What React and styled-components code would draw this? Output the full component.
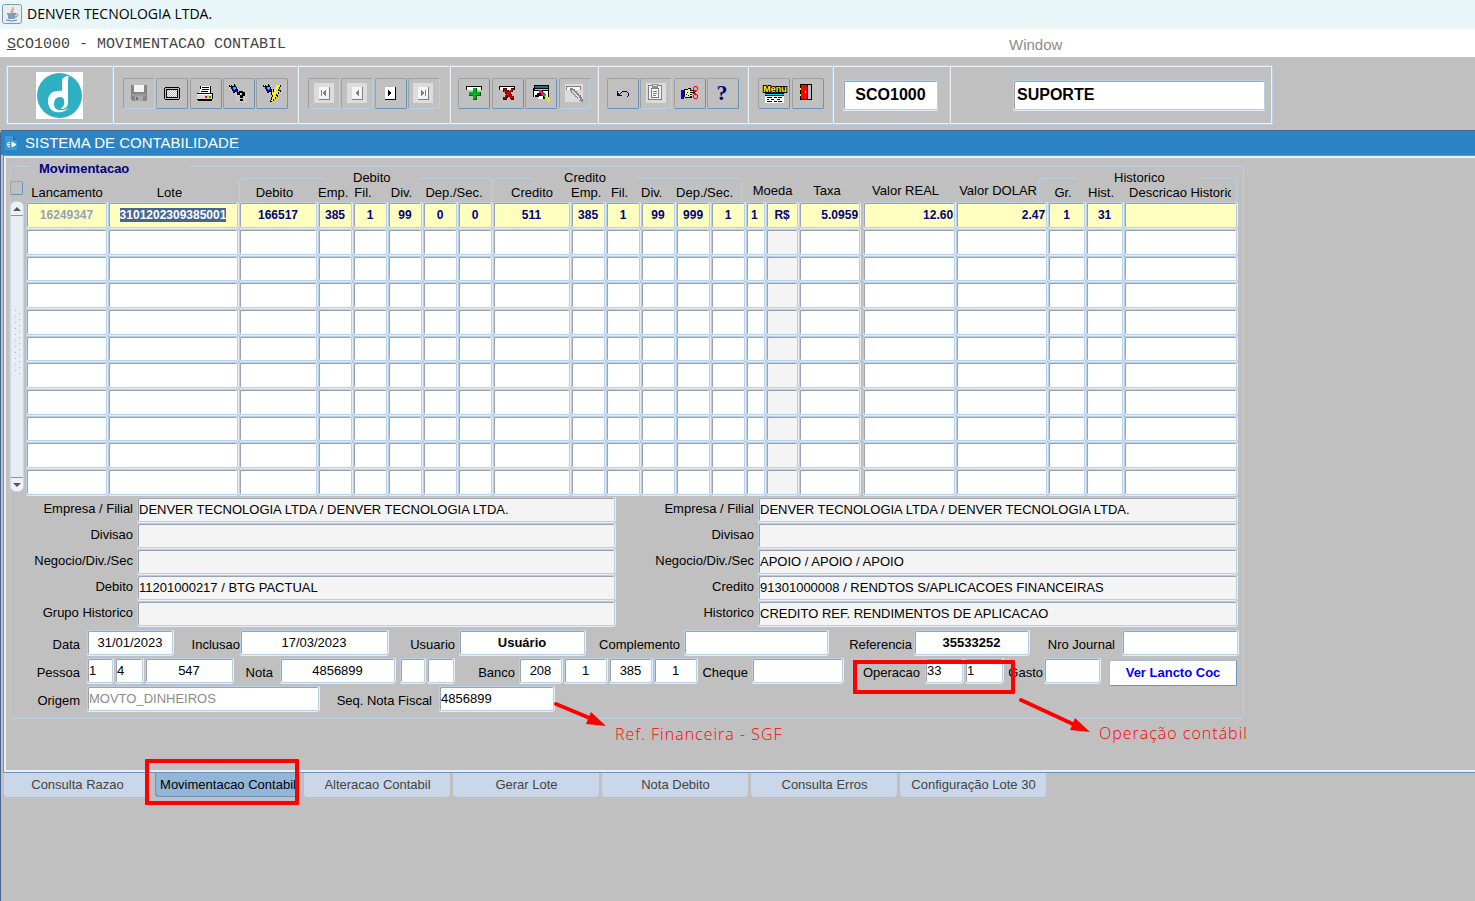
import React, { useEffect, useRef } from "react";
import styled, { createGlobalStyle, css } from "styled-components";

const sans = '"Liberation Sans", Arial, sans-serif';

const GlobalStyle = createGlobalStyle`
  * { box-sizing: border-box; }
  body { margin: 0; background: #c0c0c0; font: 13px/16px ${sans}; color: #000; }
  html, body, #root { min-height: 100%; }
  input, button, select { font: inherit; color: inherit; border-radius: 0; margin: 0; }
`;

const Page = styled.div`
  min-height: 100vh;
  display: flex;
  flex-direction: column;
  overflow: hidden;
`;

const TitleBar = styled.header`
  display: flex;
  align-items: center;
  gap: 5px;
  height: 29px;
  padding: 0 2px 2px;
  background: #e8f6f8;
  font: 14px/20px "Open Sans", "Noto Sans", sans-serif;
`;

const MenuBar = styled.nav`
  display: flex;
  align-items: center;
  height: 28px;
  padding: 3px 0 0 7px;
  background: #fff;
`;

const MenuButton = styled.button`
  border: 0;
  padding: 0;
  background: none;
  text-align: left;
  ${(p) =>
    p.$mono
      ? css`flex: 0 0 1002px; font: 15px/20px "Liberation Mono", monospace; color: #444;`
      : css`font: 15px/20px ${sans}; color: #8c8c8c;`}
`;

const ToolArea = styled.div`
  padding: 8px 6px 5px;
`;

const ToolFrame = styled.div`
  display: inline-flex;
  height: 60px;
  border: 1px solid #b8cfe5;
  box-shadow: inset 1px 1px #e8f0fa, inset -1px -1px #e8f0fa;
  vertical-align: top;
`;

const ToolSection = styled.div`
  display: flex;
  align-items: flex-start;
  justify-content: ${(p) => p.$align || "space-between"};
  width: ${(p) => p.$w}px;
  padding: ${(p) => p.$pad || "12px 9px 0 10px"};
  & + & {
    border-left: 1px solid #b8cfe5;
    box-shadow: inset 1px 0 #e8f0fa;
  }
`;

const ToolButton = styled.button`
  display: flex;
  align-items: center;
  justify-content: center;
  width: 32px;
  height: 31px;
  padding: 0 1px 2px 0;
  background: #c0c0c0;
  border: 1px solid #a0a0a0;
  border-right-color: #6b92b8;
  border-bottom-color: #6b92b8;
  border-radius: 2px;
  &:disabled {
    border-right-color: #b8cfe5;
    border-bottom-color: #b8cfe5;
  }
`;

const ToolInput = styled.input`
  width: ${(p) => p.$w}px;
  height: 30px;
  padding: 0 3px;
  border: 1px solid #b8cfe5;
  border-radius: 2px;
  box-shadow: inset 1px 1px #9aa4b0, 0 1px #e4edf8;
  background: #fff;
  font: bold 16px/20px ${sans};
  text-align: ${(p) => p.$align || "left"};
`;

const AppFrame = styled.main`
  flex: 1;
  border-left: 1px solid #46658f;
  border-top-left-radius: 4px;
`;

const AppTitle = styled.h1`
  display: flex;
  align-items: center;
  gap: 8px;
  margin: 0;
  height: 25px;
  padding-left: 4px;
  border-top: 1px solid #46658f;
  background: #2c84c4;
  color: #fff;
  font: 15px/20px ${sans};
`;

const Canvas = styled.section`
  position: relative;
  margin-left: 2px;
  border: 1px solid #6f90b8;
  border-right: 0;
  box-shadow: inset 0 2px #e8eff9, inset 2px 0 #e8eff9, inset 0 -2px #e8eff9;
  padding: 2px 0 53px 5px;
`;

const Panel = styled.fieldset`
  width: 1235px;
  min-width: 0;
  margin: 0;
  padding: 0 0 7px;
  border: 1px solid #b8cfe5;
  border-radius: 4px;
`;

const Legend = styled.legend`
  margin-left: 21px;
  padding: 5px 60px 0 8px;
  font: bold 13px/12px ${sans};
  color: #000080;
`;

const GridArea = styled.div`
  display: flex;
  gap: 2px;
  margin-top: -4px;
`;

const ScrollColumn = styled.div`
  width: 14px;
  display: flex;
  flex-direction: column;
  gap: 6px;
  padding-top: 10px;
`;

const RowCheck = styled.input`
  appearance: none;
  width: 13px;
  height: 14px;
  border: 1px solid #a0a0a0;
  border-right-color: #6b92b8;
  border-bottom-color: #6b92b8;
  border-radius: 2px;
`;

const ScrollTrack = styled.div`
  display: flex;
  flex-direction: column;
  height: 291px;
  border: 1px solid #c8d6e8;
  border-radius: 6px;
  background: #e9eef6;
  overflow: hidden;
`;

const ScrollButton = styled.button`
  display: flex;
  align-items: center;
  justify-content: center;
  height: 14px;
  padding: 0;
  border: 0 solid #8296b0;
  border-width: ${(p) => (p.$down ? "1px 0 0" : "0 0 1px")};
  background: #eef2f8;
`;

const ScrollThumb = styled.div`
  flex: 1;
  display: flex;
  align-items: center;
  justify-content: center;
  padding-bottom: 8px;
  &::after {
    content: "";
    width: 7px;
    height: 66px;
    background-image: linear-gradient(#a4b6ce 1px, transparent 1px),
      linear-gradient(#a4b6ce 1px, transparent 1px);
    background-size: 1px 6px;
    background-repeat: repeat-y;
    background-position: 1px 0, 5px 3px;
  }
`;

const Table = styled.table`
  table-layout: fixed;
  width: 1212px;
  border-collapse: separate;
  border-spacing: 0;
`;

const GroupHead = styled.th`
  position: relative;
  height: 13px;
  padding: 0 0 0 ${(p) => p.$start}px;
  font: 13px/13px ${sans};
  text-align: left;
  &::before {
    content: "";
    position: absolute;
    top: 7px;
    left: ${(p) => (p.$wide ? -10 : 0)}px;
    right: ${(p) => p.$right || 1}px;
    height: 22px;
    border: 1px solid #b8cfe5;
    border-bottom: 0;
    border-radius: 4px 4px 0 0;
  }
`;

const GroupLabel = styled.span`
  position: relative;
  padding: 0 ${(p) => p.$gap}px;
  background: #c0c0c0;
`;

const EmptyHead = styled.td`
  padding: 0;
`;

const ColHead = styled.th`
  position: relative;
  height: 18px;
  padding: ${(p) => (p.$raised ? "0 8px 4px 0" : "0 8px 1px 0")};
  ${(p) => p.$full && `padding: 0 0 ${p.$raised ? 4 : 1}px;`}
  ${(p) => p.$near && "padding: 0 15px 1px 0;"}
  ${(p) => p.$clip && "padding: 0 0 1px 5px; text-align: left;"}
  font: 13px/14px ${sans};
  white-space: nowrap;
`;

const ClipLabel = styled.span`
  display: block;
  width: 102px;
  overflow: hidden;
`;

const fieldFrame = css`
  border: 1px solid #b8cfe5;
  border-radius: 2px;
  box-shadow: inset 1px 1px #9aa4b0, 0 1px #e4edf8, 1px 0 #e4edf8;
`;

const Cell = styled.td`
  height: 27px;
  padding: 0 ${(p) => (p.$gap ? 3 : 1)}px 1px 0;
  line-height: 0;
  tr:nth-child(3n) > & {
    height: 26px;
  }
`;

const CellInput = styled.input`
  ${fieldFrame}
  display: block;
  width: 100%;
  height: 26px;
  padding: 0 1px 0 ${(p) => (p.$align === "left" ? 4 : 1)}px;
  background: ${(p) => (p.$current ? "#ffffc0" : p.$locked ? "#f4f4f4" : "#fff")};
  color: ${(p) => (p.$dim ? "#92a4b4" : "#000080")};
  font: bold 12px/16px ${sans};
  text-align: ${(p) => p.$align || "center"};
  outline: none;
  &::selection {
    background: #466590;
    color: #fff;
  }
  tr:nth-child(3n) & {
    height: 25px;
  }
`;

const Details = styled.div`
  display: grid;
  grid-template-columns: 127px 478px 143px 479px;
  grid-auto-rows: 25px;
  row-gap: 1px;
  margin-top: 1px;
`;

const DetailLabel = styled.label`
  padding: 4px 4px 0 0;
  text-align: right;
  line-height: 16px;
`;

const DetailInput = styled.input`
  ${fieldFrame}
  width: 100%;
  padding: 0 1px;
  background: #f4f4f4;
  line-height: 16px;
`;

const FormRows = styled.div`
  display: flex;
  flex-direction: column;
  gap: 3px;
  margin-top: 4px;
`;

const FormRow = styled.div`
  display: flex;
  align-items: center;
  height: 25px;
`;

const FormLabel = styled.label`
  flex: none;
  width: ${(p) => p.$w}px;
  padding: 4px ${(p) => p.$pad || 0}px 0 0;
  display: flex;
  justify-content: flex-end;
  white-space: nowrap;
`;

const FormInput = styled.input`
  ${fieldFrame}
  flex: none;
  width: ${(p) => p.$w}px;
  height: 25px;
  margin: 0 2px 0 ${(p) => p.$gap || 0}px;
  padding: 0 1px;
  background: #fff;
  color: ${(p) => (p.$dim ? "#8c8c8c" : "#000")};
  font-weight: ${(p) => (p.$bold ? "bold" : "normal")};
  text-align: ${(p) => (p.$center ? "center" : "left")};
`;

const ActionButton = styled.button`
  width: 128px;
  height: 26px;
  margin: 4px 0 0 7px;
  padding: 0;
  border: 1px solid #a8bcd0;
  border-right-color: #6b92b8;
  border-bottom-color: #6b92b8;
  border-radius: 2px;
  background: #fff;
  color: #0000ff;
  font: bold 13px/16px ${sans};
`;

const MarkBox = styled.span`
  position: absolute;
  left: ${(p) => p.$x}px;
  top: ${(p) => p.$y}px;
  width: ${(p) => p.$w}px;
  height: ${(p) => p.$h}px;
  border: 4px solid #f00;
  border-radius: 1px;
  pointer-events: none;
`;

const MarkArrow = styled.svg`
  position: absolute;
  left: ${(p) => p.$x}px;
  top: ${(p) => p.$y}px;
  pointer-events: none;
`;

const MarkNote = styled.span`
  position: absolute;
  left: ${(p) => p.$x}px;
  top: ${(p) => p.$y}px;
  color: #f00;
  font: 16px/24px "Open Sans", "Noto Sans", sans-serif;
  font-weight: 300;
  letter-spacing: 1px;
  white-space: nowrap;
`;

const TabBar = styled.div`
  display: flex;
  gap: 3px;
  padding-left: 3px;
`;

const Tab = styled.button`
  position: relative;
  width: 146px;
  height: 24px;
  padding: 0 0 0 1px;
  border: 0;
  border-radius: 0 0 4px 4px;
  background: #c9d7e9;
  color: #444;
  white-space: nowrap;
  ${(p) =>
    p.$active &&
    css`
      margin: 0 1px 0 2px;
      width: 145px;
      background: #92b6d8;
      color: #000;
      box-shadow: inset 1px -1px #6b92b8;
    `}
`;

const Icon = ({ children, size = 20, ...rest }) => (
  <svg width={size} height={size} viewBox={`0 0 ${size} ${size}`} overflow="visible" shapeRendering="crispEdges" aria-hidden="true" {...rest}>
    {children}
  </svg>
);

const JavaIcon = () => (
  <svg width="20" height="20" viewBox="0 0 20 20" aria-hidden="true">
    <rect x=".5" y=".5" width="19" height="19" rx="2" fill="#e9edf0" stroke="#7f98ad" />
    <path d="M10 3c3 2-3 3 0 6M12 5c-2 1-1 2-1 4" stroke="#e0843c" fill="none" />
    <path d="M5 10h9M6 12h7M6 14h7" stroke="#5b86ad" strokeWidth="1.3" />
    <path d="M14 10c3 0 2 3-1 3M4 16q6 2 11 0" stroke="#5b86ad" fill="none" />
  </svg>
);

const Logo = () => (
  <svg width="47" height="47" viewBox="0 0 47 47" aria-label="Denver">
    <rect width="47" height="47" fill="#fff" />
    <circle cx="23.5" cy="23.5" r="22.5" fill="#2eafc3" />
    <path
      d="M26 9c0-3 3-5 7-5-1 2-1 3-1 5v21c0 5-3 7-6 7l-1-1c2-1 3-2 3-4 1-5-1-7-4-7-4 0-6 3-6 7 0 5 4 7 9 6 2 0 4-1 6-2-4 4-9 5-13 4-5-1-8-5-8-11 0-7 5-11 14-10z"
      fill="#fff"
    />
  </svg>
);

const AppIcon = () => (
  <svg width="12" height="16" viewBox="0 0 12 16" aria-hidden="true">
    <path d="M0 1h8l4 4v10H0z" fill="#3a9ad8" />
    <path d="M8 1v4h4z" fill="#1c6ca8" />
    <path d="M2 9.500h3M7 7v5l4-2.500z" stroke="#fff" strokeWidth="1" fill="#fff" />
    <path d="M5 7a2.500 2.500 0 100 5" stroke="#fff" fill="none" />
  </svg>
);

const SaveIcon = () => (
  <Icon>
    <path d="M2 2h16v16H3v-1H2z" fill="#868686" />
    <path d="M5 2h10v7H5z" fill="#f4f4f4" />
    <path d="M3 11h14v2H3z" fill="#9c9c9c" />
    <path d="M6 13h8v5H6z" fill="#a8a8a8" />
    <path d="M7 14h2v3H7z" fill="#707070" />
  </Icon>
);

const ScreenIcon = () => (
  <Icon>
    <path d="M3 4h14v1h1v11h-1v1H3v-1H2V5h1z" fill="#000" />
    <path d="M3 5h14v11H3z" fill="#c0c0c0" />
    <path d="M4 6h12v9H4z" fill="#000" />
    <path d="M5 7h10v7H5z" fill="#fff" />
    {[7, 9, 11, 13].map((y) => (
      <path key={y} d={`M5 ${y}h1v1h-1zM7 ${y}h1v1h-1zM9 ${y}h1v1h-1zM11 ${y}h1v1h-1zM13 ${y}h1v1h-1z`} fill="#40d8e8" />
    ))}
    {[8, 10, 12].map((y) => (
      <path key={y} d={`M6 ${y}h1v1h-1zM8 ${y}h1v1h-1zM10 ${y}h1v1h-1zM12 ${y}h1v1h-1zM14 ${y}h1v1h-1z`} fill="#c0c0c0" />
    ))}
  </Icon>
);

const PrinterIcon = () => (
  <Icon>
    <path d="M5 3h11v7H5z" fill="#000" />
    <path d="M6 3h9v7H4V9h1V6h1z" fill="#fff" />
    <path d="M7 4h7v1H7zM7 6h7v1H7zM6 8h7v1H6z" fill="#000" />
    <path d="M2 10h16v6h-1v2H3v-1H2z" fill="#000" />
    <path d="M2 11h15v5H2z" fill="#d8d8d8" />
    <path d="M2 11h15v1H2z" fill="#fff" />
    <path d="M10 13h2v2h-2z" fill="#f00" />
    <path d="M12 13h2v2h-2z" fill="#e8e800" />
    <path d="M14 13h2v2h-2z" fill="#00b000" />
  </Icon>
);

const Torch = () => (
  <>
    <path d="M1 2h3v1h2V1h1v1h1v2h1v2h1v3H7v1H5V8H4V6H3V4H1z" fill="#000" />
    <path d="M5 4h3v2H7v1H6V6H5z" fill="#00e0e8" />
    <path d="M4 5h1v1h1v1h1v2H5V7H4zM8 6h1v2H8z" fill="#0000f0" />
    <path d="M7 2h1v1H7z" fill="#e00000" />
    <path d="M2 2h1v1H2z" fill="#fff" />
  </>
);

const QueryIcon = () => (
  <Icon>
    <Torch />
    {[10, 12, 14, 16, 18].map((y) => (
      <path key={y} d={`M8 ${y}h1v1h-1zM10 ${y}h1v1h-1zM12 ${y}h1v1h-1zM14 ${y}h1v1h-1zM16 ${y}h1v1h-1zM18 ${y}h1v1h-1z`} fill="#f4f060" />
    ))}
    <path d="M9 9h2V8h4v1h2v4h-2v2h-3v-3h2v-2h-2v2H9zM12 16h3v2h-3z" fill="#000" />
  </Icon>
);

const RunQueryIcon = () => (
  <Icon>
    <Torch />
    <path d="M14 2h5v2h-1v2h-1v1h2v2h-2v2h-2v1h1v2h-2v2h-2v2h-2v1H8v-2h1v-3h1v-2H9V9h2V6h2V4h1z" fill="#000" />
    <path d="M14 2h4v2h-1v2h-1v2h2v1h-2v2h-2v2h1v1h-2v2h-2v2H9v-1h1v-3h1v-2h-1V9h2V6h1V4h1z" fill="#ffee20" />
  </Icon>
);

const NavIcon = ({ dir, bar, off }) => (
  <Icon>
    {off && <path d="M0 0h20v20H0z" fill="#dcdcdc" />}
    <path d="M5 4h11v13H5z" fill={off ? "#808080" : "#000"} />
    <path d="M5 4h10v12H5z" fill={off ? "#f4f4f4" : "#fff"} />
    <path
      d={dir === "left" ? "M12 7v6h-1v-1h-1v-1H9V9h1V8h1V7z" : "M8 7v6h1v-1h1v-1h1V9h-1V8H9V7z"}
      fill={off ? "#808080" : "#000"}
    />
    {bar && <path d={dir === "left" ? "M7 7h1v6H7z" : "M12 7h1v6h-1z"} fill={off ? "#808080" : "#000"} />}
  </Icon>
);

const RecordBar = () => (
  <>
    <path d="M2 3h16v4H2z" fill="#000" />
    <path d="M3 4h14v3H3z" fill="#fff" />
  </>
);

const AddIcon = () => (
  <Icon>
    <RecordBar />
    <path d="M9 5h4v4h4v4h-4v4H9v-4H5V9h4z" fill="#005800" />
    <path d="M9 5h3v4h4v3h-4v4H9v-4H5V9h4z" fill="#00b020" />
  </Icon>
);

const DeleteIcon = () => (
  <Icon>
    <RecordBar />
    <path d="M6 5h4v2h2v1h1V7h1V5h3v2h-1v2h-2v2h1v2h2v4h-3v-1h-1v-2h-2v1h-1v2H6v-3h2v-1h1v-2H8V9H6z" fill="#600000" />
    <path d="M7 6h2v2h2v1h2V7h1V6h2v1h-1v2h-2v2h1v2h2v2h-2v-1h-1v-2h-2v1H9v2H7v-1h1v-2h1v-1h1v-1H9V9H7z" fill="#c80000" />
  </Icon>
);

const ClearIcon = () => (
  <Icon>
    <path d="M3 2h15v14H7v-2H2V5h1z" fill="#000" />
    <path d="M4 3h13v2H4z" fill="#008080" />
    <path d="M4 6h13v1H4z" fill="#c0c0c0" />
    <path d="M3 8h5v2H6v2H4v2H3zM12 8h5v7h-2v-3h-2zM8 13h4v3H7z" fill="#fff" />
    <path d="M8 7h3v2h2v1h1v3h-3v-1h-1v-2H8z" fill="#f01070" />
    <path d="M12 11h3v3h-2v-1h-1z" fill="#00c020" />
    <path d="M14 13h2v1h2v2h1v3h-2v-1h-1v-2h-2z" fill="#f0e020" />
  </Icon>
);

const FindOffIcon = () => (
  <Icon>
    <path d="M1 1h18v18H1z" fill="#dcdcdc" />
    <path d="M2 3h15v4H2z" fill="#808080" />
    <path d="M3 4h13v3H3z" fill="#f4f4f4" />
    <path d="M6 5h3v1h2v2h2v2h2v2h2v2h1v2h1v3h-2v-1h-2v-2h-2v-2h-2v-2H9v-2H7V8H6z" fill="#888" />
    <path d="M8 7h1v1h1v1h1v1h1v1h1v1h1v1h1v2h1v2h-1v-1h-1v-2h-1v-1h-1v-1h-1v-1h-1v-1H9V9H8z" fill="#e4e4e4" />
  </Icon>
);

const UndoIcon = () => (
  <Icon>
    <path d="M4 8h1v2h1v1h1v1h2v1H4z" fill="#000080" />
    <path d="M7 10h1V9h1V8h5v1h1v1h1v3h-1v1h-1v-1h1v-3h-1V9H9v1H8v1H7z" fill="#000080" />
  </Icon>
);

const ClipboardIcon = () => (
  <Icon>
    <path d="M0 0h20v20H0z" fill="#dcdcdc" />
    <path d="M2 2h14v15H2z" fill="#808080" />
    <path d="M3 3h12v13H3z" fill="#f0f0f0" />
    <path d="M5 5h8v10H5z" fill="#808080" />
    <path d="M6 6h6v8H6z" fill="#fff" />
    <path d="M6 1h6v4H6z" fill="#909090" />
    <path d="M7 2h4v1H7z" fill="#e8e8e8" />
    <path d="M7 8h4v1H7zM7 10h4v1H7zM7 12h3v1H7z" fill="#808080" />
  </Icon>
);

const CutIcon = () => (
  <Icon>
    <path d="M2 7h3v9H2z" fill="#0000e0" />
    <path d="M5 6h4V5h3v2h4v3h-3v5h-7v-1H5z" fill="#000" />
    <path d="M6 7h3V6h2v2h4v1h-4v1h2v1h-2v1h2v1h-2v1H6z" fill="#f8f070" />
    <path d="M8 9h1v1H8zM7 11h1v1H7zM9 12h1v1H9z" fill="#000" />
    <path d="M15 3h3v1h1v3h-1v1h-3V7h-1V4h1zM15 11h3v1h1v3h-1v1h-3v-1h-1v-3h1z" fill="#f00" />
    <path d="M15 4h3v3h-3zM15 12h3v3h-3z" fill="#c0c0c0" />
    <path d="M14 8h3v1h-3zM14 10h3v1h-3z" fill="#f00" />
  </Icon>
);

const HelpIcon = () => (
  <Icon>
    <text x="10" y="17" textAnchor="middle" fontFamily="Liberation Serif, serif" fontWeight="bold" fontSize="22" fill="#000080">
      ?
    </text>
  </Icon>
);

const MenuIcon = () => (
  <Icon>
    <text x="11" y="9" textAnchor="middle" fontFamily="Liberation Sans, sans-serif" fontWeight="bold" fontSize="9" stroke="#000" strokeWidth="2" paintOrder="stroke" fill="#ffff00">
      Menu
    </text>
    <path d="M1 10h19v10H1z" fill="#000" />
    <path d="M1 11h19v1H1z" fill="#00e0e8" />
    <path d="M1 13h19v7H1z" fill="#fff" />
    <path d="M3 14h5v1H3zM3 16h2v1H3zM3 18h5v1H3zM10 14h3v1h-3zM14 14h4v1h-4zM10 18h3v1h-3zM14 18h4v1h-4zM7 16h3v1H7zM13 16h3v1h-3z" fill="#000" />
  </Icon>
);

const ExitIcon = () => (
  <Icon>
    <path d="M2 1h12v16H2z" fill="#000" />
    <path d="M10 2h3v14h-3z" fill="#c0c0c0" />
    <path d="M3 2h6v14H3z" fill="#f00" />
    <path d="M2 5h1v2H2zM2 11h1v2H2z" fill="#e8e800" />
    <path d="M7 8h1v2H7z" fill="#fff" />
  </Icon>
);

const tools = [
  {
    w: 185,
    items: [
      ["Salvar", <SaveIcon />, true],
      ["Tela", <ScreenIcon />],
      ["Imprimir", <PrinterIcon />],
      ["Entrar consulta", <QueryIcon />],
      ["Executar consulta", <RunQueryIcon />],
    ],
  },
  {
    w: 152,
    items: [
      ["Primeiro", <NavIcon dir="left" bar off />, true],
      ["Anterior", <NavIcon dir="left" off />, true],
      ["Proximo", <NavIcon dir="right" />],
      ["Ultimo", <NavIcon dir="right" bar off />, true],
    ],
    pad: "12px 9px 0 10px",
  },
  {
    w: 148,
    pad: "12px 6px 0 8px",
    items: [
      ["Inserir", <AddIcon />],
      ["Remover", <DeleteIcon />],
      ["Limpar", <ClearIcon />],
      ["Localizar", <FindOffIcon />, true],
    ],
  },
  {
    w: 150,
    items: [
      ["Desfazer", <UndoIcon />],
      ["Colar", <ClipboardIcon />, true],
      ["Recortar", <CutIcon />],
      ["Ajuda", <HelpIcon />],
    ],
    pad: "12px 8px 0 9px",
  },
  {
    w: 85,
    items: [
      ["Menu", <MenuIcon />],
      ["Sair", <ExitIcon />],
    ],
    pad: "12px 8px 0 10px",
  },
];

const columns = [
  { w: 82, v: "16249347", dim: true },
  { w: 131, v: "3101202309385001", selected: true },
  { w: 79, v: "166517" },
  { w: 35, v: "385" },
  { w: 35, v: "1" },
  { w: 35, v: "99" },
  { w: 35, v: "0" },
  { w: 35, v: "0" },
  { w: 78, v: "511" },
  { w: 35, v: "385" },
  { w: 35, v: "1" },
  { w: 35, v: "99" },
  { w: 35, v: "999" },
  { w: 35, v: "1" },
  { w: 20, v: "1", align: "left" },
  { w: 33, v: "R$", locked: true },
  { w: 64, v: "5.0959", align: "right", gap: true },
  { w: 93, v: "12.60", align: "right" },
  { w: 92, v: "2.47", align: "right" },
  { w: 38, v: "1" },
  { w: 38, v: "31" },
  { w: 114, v: "" },
];

const details = [
  ["Empresa / Filial", "DENVER TECNOLOGIA LTDA / DENVER TECNOLOGIA LTDA.", "Empresa / Filial", "DENVER TECNOLOGIA LTDA / DENVER TECNOLOGIA LTDA."],
  ["Divisao", "", "Divisao", ""],
  ["Negocio/Div./Sec", "", "Negocio/Div./Sec", "APOIO / APOIO / APOIO"],
  ["Debito", "11201000217 / BTG PACTUAL", "Credito", "91301000008 / RENDTOS S/APLICACOES FINANCEIRAS"],
  ["Grupo Historico", "", "Historico", "CREDITO REF. RENDIMENTOS DE APLICACAO"],
];

const Field = ({ id, label, lw, pad, value = "", ...rest }) => (
  <>
    <FormLabel htmlFor={id} $w={lw} $pad={pad}>
      {label}
    </FormLabel>
    <FormInput id={id} defaultValue={value} {...rest} />
  </>
);

const tabs = ["Consulta Razao", "Movimentacao Contabil", "Alteracao Contabil", "Gerar Lote", "Nota Debito", "Consulta Erros", "Configuração Lote 30"];

export default function App() {
  const lote = useRef(null);
  useEffect(() => {
    lote.current.focus({ preventScroll: true });
    lote.current.select();
  }, []);

  return (
    <Page>
      <GlobalStyle />
      <TitleBar>
        <JavaIcon />
        <span>DENVER TECNOLOGIA LTDA.</span>
      </TitleBar>
      <MenuBar>
        <MenuButton $mono>
          <u>S</u>CO1000 - MOVIMENTACAO CONTABIL
        </MenuButton>
        <MenuButton>Window</MenuButton>
      </MenuBar>
      <ToolArea>
        <ToolFrame>
          <ToolSection $w={105} $align="center" $pad="6px 0 0">
            <Logo />
          </ToolSection>
          {tools.map((section, i) => (
            <ToolSection key={i} $w={section.w} $pad={section.pad}>
              {section.items.map(([name, icon, off]) => (
                <ToolButton key={name} aria-label={name} disabled={off}>
                  {icon}
                </ToolButton>
              ))}
            </ToolSection>
          ))}
          <ToolSection $w={117} $pad="14px 10px 0">
            <ToolInput $w={95} $align="center" defaultValue="SCO1000" aria-label="Programa" />
          </ToolSection>
          <ToolSection $w={323} $align="flex-end" $pad="14px 7px 0">
            <ToolInput $w={252} defaultValue="SUPORTE" aria-label="Perfil" />
          </ToolSection>
        </ToolFrame>
      </ToolArea>
      <AppFrame>
        <AppTitle>
          <AppIcon />
          SISTEMA DE CONTABILIDADE
        </AppTitle>
        <Canvas>
          <Panel>
            <Legend>Movimentacao</Legend>
            <GridArea>
              <ScrollColumn>
                <RowCheck type="checkbox" aria-label="Selecionar" />
                <ScrollTrack>
                  <ScrollButton aria-label="Subir">
                    <svg width="8" height="4" viewBox="0 0 8 4"><path d="M0 4l4-4 4 4z" fill="#556" /></svg>
                  </ScrollButton>
                  <ScrollThumb />
                  <ScrollButton $down aria-label="Descer">
                    <svg width="8" height="4" viewBox="0 0 8 4"><path d="M0 0l4 4 4-4z" fill="#556" /></svg>
                  </ScrollButton>
                </ScrollTrack>
              </ScrollColumn>
              <Table>
                <colgroup>
                  {columns.map((c, i) => (
                    <col key={i} width={c.w} />
                  ))}
                </colgroup>
                <thead>
                  <tr>
                    <EmptyHead colSpan={2} />
                    <GroupHead colSpan={6} $start={86}><GroupLabel $gap={28}>Debito</GroupLabel></GroupHead>
                    <GroupHead colSpan={6} $start={40} $right={4}><GroupLabel $gap={31}>Credito</GroupLabel></GroupHead>
                    <EmptyHead colSpan={5} />
                    <GroupHead colSpan={3} $start={30} $wide><GroupLabel $gap={36}>Historico</GroupLabel></GroupHead>
                  </tr>
                  <tr>
                    <ColHead $full>Lancamento</ColHead>
                    <ColHead>Lote</ColHead>
                    <ColHead>Debito</ColHead>
                    <ColHead>Emp.</ColHead>
                    <ColHead $near>Fil.</ColHead>
                    <ColHead>Div.</ColHead>
                    <ColHead colSpan={2}>Dep./Sec.</ColHead>
                    <ColHead $full>Credito</ColHead>
                    <ColHead>Emp.</ColHead>
                    <ColHead>Fil.</ColHead>
                    <ColHead $near>Div.</ColHead>
                    <ColHead colSpan={2} $near>Dep./Sec.</ColHead>
                    <ColHead colSpan={2} $raised $full>Moeda</ColHead>
                    <ColHead $raised>Taxa</ColHead>
                    <ColHead $raised>Valor REAL</ColHead>
                    <ColHead $raised>Valor DOLAR</ColHead>
                    <ColHead>Gr.</ColHead>
                    <ColHead>Hist.</ColHead>
                    <ColHead $clip><ClipLabel>Descricao Historico</ClipLabel></ColHead>
                  </tr>
                </thead>
                <tbody>
                  {Array.from({ length: 11 }, (_, r) => (
                    <tr key={r}>
                      {columns.map((c, i) => (
                        <Cell key={i} $gap={c.gap}>
                          <CellInput
                            ref={r === 0 && c.selected ? lote : undefined}
                            aria-label={`Linha ${r + 1}, coluna ${i + 1}`}
                            defaultValue={r === 0 ? c.v : ""}
                            $current={r === 0}
                            $locked={c.locked}
                            $dim={c.dim}
                            $align={c.align}
                          />
                        </Cell>
                      ))}
                    </tr>
                  ))}
                </tbody>
              </Table>
            </GridArea>
            <Details>
              {details.map(([l1, v1, l2, v2], i) => (
                <React.Fragment key={i}>
                  <DetailLabel htmlFor={`deb${i}`}>{l1}</DetailLabel>
                  <DetailInput id={`deb${i}`} readOnly value={v1} />
                  <DetailLabel htmlFor={`cred${i}`}>{l2}</DetailLabel>
                  <DetailInput id={`cred${i}`} readOnly value={v2} />
                </React.Fragment>
              ))}
            </Details>
            <FormRows>
              <FormRow>
                <Field id="data" label="Data" lw={77} pad={7} $w={86} $center value="31/01/2023" />
                <Field id="inclusao" label="Inclusao" lw={65} $w={148} $center value="17/03/2023" />
                <Field id="usuario" label="Usuario" lw={69} pad={4} $w={126} $center $bold value="Usuário" />
                <Field id="complemento" label="Complemento" lw={97} pad={4} $w={144} />
                <Field id="referencia" label="Referencia" lw={84} pad={2} $w={115} $center $bold value="35533252" />
                <Field id="journal" label="Nro Journal" lw={91} pad={7} $w={116} />
              </FormRow>
              <FormRow>
                <Field id="pessoa" label="Pessoa" lw={77} pad={7} $w={26} value="1" />
                <FormInput aria-label="Pessoa tipo" $w={28} defaultValue="4" />
                <FormInput aria-label="Pessoa codigo" $w={88} $center defaultValue="547" />
                <Field id="nota" label="Nota" lw={45} pad={7} $w={115} $center value="4856899" />
                <FormInput aria-label="Nota serie" $w={25} $gap={3} />
                <FormInput aria-label="Nota tipo" $w={27} />
                <Field id="banco" label="Banco" lw={63} pad={4} $w={43} $center value="208" />
                <FormInput aria-label="Banco agencia" $w={43} $center defaultValue="1" />
                <FormInput aria-label="Banco empresa" $w={43} $center defaultValue="385" />
                <FormInput aria-label="Banco filial" $w={43} $center defaultValue="1" />
                <Field id="cheque" label="Cheque" lw={53} pad={4} $w={91} />
                <Field id="operacao" label="Operacao" lw={80} pad={5} $w={38} value="33" />
                <FormInput aria-label="Operacao tipo" $w={38} defaultValue="1" />
                <Field id="gasto" label="Gasto" lw={39} pad={1} $w={56} />
                <ActionButton>Ver Lancto Coc</ActionButton>
              </FormRow>
              <FormRow>
                <Field id="origem" label="Origem" lw={77} pad={7} $w={232} $dim value="MOVTO_DINHEIROS" />
                <Field id="seq" label="Seq. Nota Fiscal" lw={118} pad={7} $w={115} value="4856899" />
              </FormRow>
            </FormRows>
          </Panel>
          <MarkBox $x={849} $y={504} $w={162} $h={34} />
          <MarkArrow $x={549} $y={545} width="56" height="28" viewBox="0 0 56 28">
            <path d="M3 3l36 15" stroke="#f00" strokeWidth="4" strokeLinecap="round" />
            <path d="M38 11l15 14-20-2z" fill="#f00" />
          </MarkArrow>
          <MarkArrow $x={1013} $y={540} width="76" height="40" viewBox="0 0 76 40">
            <path d="M4 4l54 25" stroke="#f00" strokeWidth="4" strokeLinecap="round" />
            <path d="M58 22l15 14-20-2z" fill="#f00" />
          </MarkArrow>
          <MarkNote $x={611} $y={566}>Ref. Financeira - SGF</MarkNote>
          <MarkNote $x={1095} $y={565}>Operação contábil</MarkNote>
        </Canvas>
        <TabBar role="tablist">
          {tabs.map((t, i) => (
            <Tab key={t} role="tab" aria-selected={i === 1} $active={i === 1}>
              {t}
              {i === 1 && <MarkBox $x={-10} $y={-14} $w={154} $h={46} />}
            </Tab>
          ))}
        </TabBar>
      </AppFrame>
    </Page>
  );
}
